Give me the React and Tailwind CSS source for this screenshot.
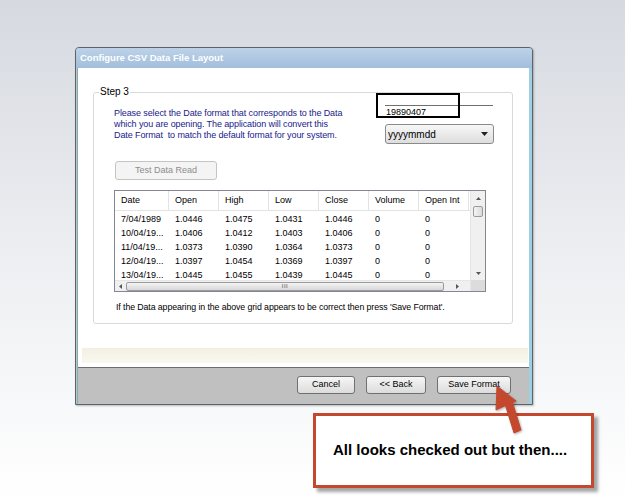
import React from "react";

const rows = [
  ["7/04/1989", "1.0446", "1.0475", "1.0431", "1.0446", "0", "0"],
  ["10/04/19...", "1.0406", "1.0412", "1.0403", "1.0406", "0", "0"],
  ["11/04/19...", "1.0373", "1.0390", "1.0364", "1.0373", "0", "0"],
  ["12/04/19...", "1.0397", "1.0454", "1.0369", "1.0397", "0", "0"],
  ["13/04/19...", "1.0445", "1.0455", "1.0439", "1.0445", "0", "0"],
];
const heads = ["Date", "Open", "High", "Low", "Close", "Volume", "Open Int"];
const widths = ["w-[54px]", "w-[50px]", "w-[50px]", "w-[50px]", "w-[50px]", "w-[50px]", "w-[50px]"];

function Btn({ children, w }) {
  return (
    <div
      className={`${w} h-[18px] flex items-center justify-center rounded-[3px] border border-[#707070] bg-gradient-to-b from-[#f6f6f6] to-[#dcdcdc] text-[9px] text-black`}
    >
      {children}
    </div>
  );
}

export default function App() {
  return (
    <div
      className="relative w-[625px] h-[500px] overflow-hidden bg-gradient-to-b from-[#d6d9e0] via-[#eceef1] to-[#ffffff]"
      style={{ fontFamily: '"Liberation Sans", Arial, sans-serif' }}
    >
      <div className="pt-[47px] pl-[75px]">
        {/* window */}
        <div className="w-[458px] h-[358px] flex flex-col border border-[#5f6266] rounded-t-[4px] bg-[#9fcfe3] shadow-[1px_1px_2px_rgba(0,0,0,0.25)]">
          <div className="h-[20px] shrink-0 flex items-center pl-[4px] rounded-t-[3px] bg-gradient-to-b from-[#bdd2e8] to-[#a2bedc] text-white font-bold text-[9.5px]">
            Configure CSV Data File Layout
          </div>
          <div className="flex-1 flex flex-col mr-[3px] ml-[1px] border-l border-[#a0a0a0] bg-white">
            {/* client */}
            <div className="h-[299px] flex flex-col bg-white">
              <div className="mt-[24px] ml-[15px] w-[420px] h-[232px] relative border border-[#d3dbe1] rounded-[3px]">
                <div className="absolute left-[5px] top-[-7px] bg-white px-[1px] text-[10px] leading-[12px] text-black">
                  Step 3
                </div>
                <div className="flex">
                  <div className="pl-[20px] pt-[15px] w-[282px] text-[9px] leading-[11px] text-[#1a1a8c] tracking-[-0.1px]">
                    Please select the Date format that corresponds to the Data
                    <br />
                    which you are opening. The application will convert this
                    <br />
                    Date Format&nbsp; to match the default format for your system.
                  </div>
                  <div className="relative pl-[9px] pt-[12px]">
                    <div className="w-[108px] border-t border-[#707070] pl-[1px] pt-[1px] text-[9px] leading-[11px] text-black">
                      19890407
                    </div>
                    <div className="absolute left-0 top-[0px] w-[84px] h-[25px] border-2 border-black"></div>
                    <div className="mt-[6px] w-[109px] h-[20px] flex items-center justify-between pl-[2px] pr-[5px] rounded-[3px] border border-[#8a8a8a] bg-gradient-to-b from-[#f7f7f7] to-[#dedede] text-[10px] text-black">
                      <span>yyyymmdd</span>
                      <svg width="7" height="4" viewBox="0 0 7 4"><path d="M0 0H7L3.5 4Z" fill="#222" /></svg>
                    </div>
                  </div>
                </div>
                <div className="ml-[21px] mt-[17px] w-[102px] h-[19px] flex items-center justify-center rounded-[3px] border border-[#c4c4c4] bg-[#f4f4f4] text-[9px] text-[#8d8d8d]">
                  Test Data Read
                </div>
                {/* grid */}
                <div className="ml-[20px] mt-[10px] w-[372px] h-[102px] border border-[#828790] flex bg-white">
                  <div className="flex-1 flex flex-col overflow-hidden">
                    <div className="h-[20px] flex border-b border-[#e3e3e3] bg-white">
                      {heads.map((h, i) => (
                        <div key={h} className={`${widths[i]} shrink-0 flex items-center pl-[6px] border-r border-[#e3e3e3] text-[9px] text-black`}>
                          {h}
                        </div>
                      ))}
                    </div>
                    <div className="flex-1 pt-[1px] overflow-hidden">
                      {rows.map((r, ri) => (
                        <div key={ri} className="h-[14px] flex items-center">
                          {r.map((c, i) => (
                            <div key={i} className={`${widths[i]} shrink-0 pl-[6px] text-[9px] leading-[14px] text-black whitespace-nowrap`}>
                              {c}
                            </div>
                          ))}
                        </div>
                      ))}
                    </div>
                    <div className="h-[11px] shrink-0 flex items-center bg-[#f0f0f0] border-t border-[#e6e6e6]">
                      <div className="w-[11px] flex justify-center">
                        <svg width="3" height="5" viewBox="0 0 3 5"><path d="M3 0V5L0 2.5Z" fill="#555" /></svg>
                      </div>
                      <div className="w-[318px] h-[9px] rounded-[2px] border border-[#9a9a9a] bg-gradient-to-b from-[#f4f4f4] to-[#d8d8d8] flex items-center justify-center">
                        <span className="text-[6px] leading-[6px] text-[#555] tracking-[0.5px]">III</span>
                      </div>
                      <div className="flex-1 flex justify-center">
                        <svg width="3" height="5" viewBox="0 0 3 5"><path d="M0 0V5L3 2.5Z" fill="#555" /></svg>
                      </div>
                    </div>
                  </div>
                  <div className="w-[15px] flex flex-col bg-[#f0f0f0] border-l border-[#e6e6e6]">
                    <div className="h-[15px] flex items-center justify-center">
                      <svg width="5" height="3" viewBox="0 0 5 3"><path d="M0 3H5L2.5 0Z" fill="#555" /></svg>
                    </div>
                    <div className="mx-[2px] h-[11px] rounded-[2px] border border-[#9a9a9a] bg-gradient-to-r from-[#f4f4f4] to-[#dadada]"></div>
                    <div className="flex-1"></div>
                    <div className="h-[14px] flex items-center justify-center">
                      <svg width="5" height="3" viewBox="0 0 5 3"><path d="M0 0H5L2.5 3Z" fill="#555" /></svg>
                    </div>
                    <div className="h-[11px] bg-[#dcdcdc]"></div>
                  </div>
                </div>
                <div className="ml-[22px] mt-[10px] text-[8.8px] leading-[11px] text-black tracking-[-0.1px]">
                  If the Data appearing in the above grid appears to be correct then press 'Save Format'.
                </div>
              </div>
              <div className="mt-[24px] ml-[4px] mr-[1px] h-[15px] bg-gradient-to-b from-[#f2efe2] to-[#faf8f0]"></div>
            </div>
            <div className="flex-1 border-t border-[#6d6d6d] bg-[#c0c0c0] flex items-start justify-end pr-[18px] pt-[8px] gap-[11px]">
              <Btn w="w-[58px]">Cancel</Btn>
              <Btn w="w-[60px]">&lt;&lt; Back</Btn>
              <Btn w="w-[74px]">Save Format</Btn>
            </div>
          </div>
        </div>
      </div>

      {/* callout */}
      <div className="absolute left-[313px] top-[413px] w-[281px] h-[75px] border-[3px] border-[#c3482d] bg-white shadow-[4px_4px_3px_rgba(0,0,0,0.35)] flex items-center pl-[17px]">
        <span className="font-bold text-[15px] text-black">All looks checked out but then....</span>
      </div>

      {/* arrow */}
      <svg className="absolute left-0 top-0" width="625" height="500" viewBox="0 0 625 500">
        <polygon
          points="497,386 516,401 512.5,402.5 521,430 514,433 505.5,405.5 496,410"
          fill="#c3482d"
          stroke="#c3482d"
          strokeWidth="1"
          strokeLinejoin="round"
          style={{ filter: "drop-shadow(1px 1px 1px rgba(0,0,0,0.3))" }}
        />
      </svg>
    </div>
  );
}
